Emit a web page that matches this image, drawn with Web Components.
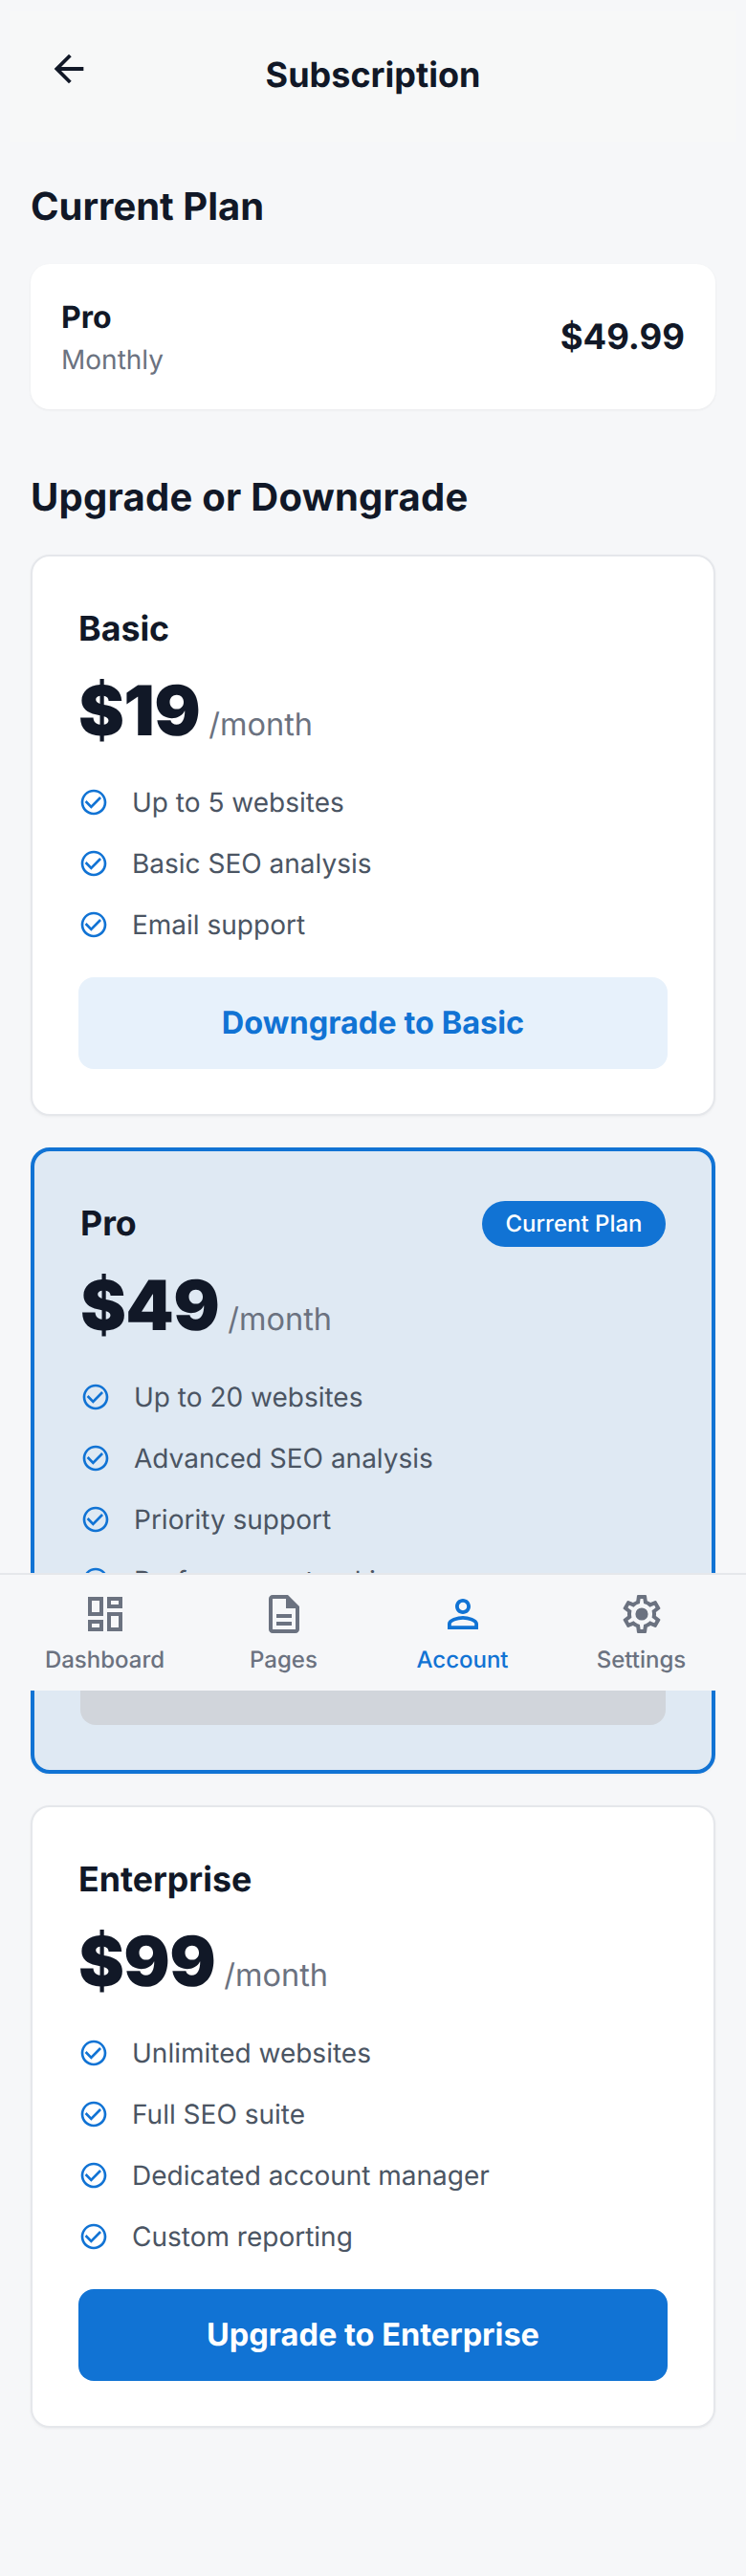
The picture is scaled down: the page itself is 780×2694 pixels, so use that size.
<!DOCTYPE html>
<html lang="en"><head><meta charset="utf-8"><title>Subscription</title>
<style>
html,body{margin:0;padding:0;background:#f6f7f9;font-family:Inter,"Liberation Sans",sans-serif;color:#111827;text-rendering:geometricPrecision}
body{position:relative;width:780px;height:2694px;overflow:hidden}
</style></head><body>
<sub-app></sub-app>
<script>
const ICONS={
back:'M20 11H7.83l5.59-5.59L12 4l-8 8 8 8 1.41-1.41L7.83 13H20v-2z',
check:'M16.59 7.58 10 14.17l-3.59-3.58L5 12l5 5 8-8zM12 2C6.48 2 2 6.48 2 12s4.48 10 10 10 10-4.48 10-10S17.52 2 12 2zm0 18c-4.42 0-8-3.58-8-8s3.58-8 8-8 8 3.58 8 8-3.58 8-8 8z',
dashboard:'M19 5v2h-4V5h4M9 5v6H5V5h4m10 8v6h-4v-6h4M9 17v2H5v-2h4M21 3h-8v6h8V3zM11 3H3v10h8V3zm10 8h-8v10h8V11zm-10 4H3v6h8v-6z',
pages:'M8 16h8v2H8zm0-4h8v2H8zm6-10H6c-1.1 0-2 .9-2 2v16c0 1.1.89 2 1.99 2H18c1.1 0 2-.9 2-2V8l-6-6zm4 18H6V4h7v5h5v11z',
account:'M12 5.9c1.16 0 2.1.94 2.1 2.1s-.94 2.1-2.1 2.1S9.9 9.16 9.9 8s.94-2.1 2.1-2.1m0 9c2.97 0 6.1 1.46 6.1 2.1v1.1H5.9V17c0-.64 3.13-2.1 6.1-2.1M12 4C9.79 4 8 5.79 8 8s1.79 4 4 4 4-1.79 4-4-1.79-4-4-4zm0 9c-2.67 0-8 1.34-8 4v3h16v-3c0-2.66-5.33-4-8-4z',
settings:'M19.43 12.98c.04-.32.07-.64.07-.98 0-.34-.03-.66-.07-.98l2.11-1.65c.19-.15.24-.42.12-.64l-2-3.46c-.09-.16-.26-.25-.44-.25-.06 0-.12.01-.17.03l-2.49 1c-.52-.4-1.08-.73-1.69-.98l-.38-2.65C14.46 2.18 14.25 2 14 2h-4c-.25 0-.46.18-.49.42l-.38 2.65c-.61.25-1.17.59-1.69.98l-2.49-1c-.06-.02-.12-.03-.18-.03-.17 0-.34.09-.43.25l-2 3.46c-.13.22-.07.49.12.64l2.11 1.65c-.04.32-.07.65-.07.98 0 .33.03.66.07.98l-2.11 1.65c-.19.15-.24.42-.12.64l2 3.46c.09.16.26.25.44.25.06 0 .12-.01.17-.03l2.49-1c.52.4 1.08.73 1.69.98l.38 2.65c.03.24.24.42.49.42h4c.25 0 .46-.18.49-.42l.38-2.65c.61-.25 1.17-.59 1.69-.98l2.49 1c.06.02.12.03.18.03.17 0 .34-.09.43-.25l2-3.46c.12-.22.07-.49-.12-.64l-2.11-1.65zm-1.98-1.71c.04.31.05.52.05.73 0 .21-.02.43-.05.73l-.14 1.13.89.7 1.08.84-.7 1.21-1.27-.51-1.04-.42-.9.68c-.43.32-.84.56-1.25.73l-1.06.43-.16 1.13-.2 1.35h-1.4l-.19-1.35-.16-1.13-1.06-.43c-.43-.18-.83-.41-1.23-.71l-.91-.7-1.06.43-1.27.51-.7-1.21 1.08-.84.89-.7-.14-1.13c-.03-.31-.05-.54-.05-.74s.02-.43.05-.73l.14-1.13-.89-.7-1.08-.84.7-1.21 1.27.51 1.04.42.9-.68c.43-.32.84-.56 1.25-.73l1.06-.43.16-1.13.2-1.35h1.39l.19 1.35.16 1.13 1.06.43c.43.18.83.41 1.23.71l.91.7 1.06-.43 1.27-.51.7 1.21-1.07.85-.89.7.14 1.13zM12 8.7a3.3 3.3 0 1 0 0 6.6 3.3 3.3 0 0 0 0-6.6z'
};
const def=(name,html,attrs)=>{
  customElements.define(name,class extends HTMLElement{
    static get observedAttributes(){return attrs?Object.keys(attrs):[]}
    constructor(){super();this.attachShadow({mode:'open'}).innerHTML=html}
    attributeChangedCallback(a,o,v){attrs[a].call(this,v)}
  });
};
def('ui-icon',`<style>:host{display:block;width:var(--s,48px);height:var(--s,48px);flex:none;color:inherit}svg{display:block;width:100%;height:100%;fill:currentColor}</style><svg viewBox="0 0 24 24"><path></path></svg>`,
{name(v){this.shadowRoot.querySelector('path').setAttribute('d',ICONS[v]||'')}});
def('top-bar',`<style>
:host{display:block;height:137px;margin:11px 10px 0;background:#f7f8f8;position:relative}
.bar{display:grid;grid-template-columns:48px 1fr 48px;padding:38px 0 0 39px;width:calc(100% - 78px)}
ui-icon{--s:46px;color:#111827}
h1{margin:0;padding-top:7px;font:700 36px/44px Inter,sans-serif;color:#111827;text-align:center}
</style><div class="bar"><ui-icon name="back"></ui-icon><h1><slot></slot></h1></div>`);
def('section-title',`<style>
:host{display:block;margin:var(--top,0) 0 31px}
h2{margin:0;font:700 40px/58px Inter,sans-serif;letter-spacing:var(--ls,0);color:#111827}
</style><h2><slot></slot></h2>`);
def('current-plan',`<style>
:host{display:flex;justify-content:space-between;align-items:center;height:152px;box-sizing:border-box;padding:0 32px;background:#fff;border-radius:20px;box-shadow:0 1px 3px rgba(0,0,0,.06)}
.n{font:700 32px/44px Inter,sans-serif;color:#111827;margin-top:4px}
.c{font:400 28px/44px Inter,sans-serif;color:#6b7280}
.p{font:700 36.5px/48px Inter,sans-serif;color:#111827}
</style><div><div class="n"><slot name="name"></slot></div><div class="c"><slot name="cycle"></slot></div></div><div class="p"><slot name="price"></slot></div>`);
def('feature-item',`<style>
:host{display:flex;align-items:center;gap:24px;height:64px;font:400 28px/40px Inter,sans-serif;color:#4b5563}
ui-icon{--s:32px;color:#1173d4}
</style><ui-icon name="check"></ui-icon><span><slot></slot></span>`);
def('plan-button',`<style>
:host{display:flex;align-items:center;justify-content:center;height:96px;border-radius:16px;font:700 32.5px/40px Inter,sans-serif;overflow:hidden}
:host([kind=soft]){background:#e7f1fb;color:#1173d4}
:host([kind=solid]){background:#1173d4;color:#fff}
:host([kind=off]){background:#d1d5db;color:#6b7280}
</style><slot></slot>`);
def('plan-card',`<style>
:host{display:block;box-sizing:border-box;background:#fff;border:2px solid #e5e7eb;border-radius:20px;padding:50px 48px 47px;box-shadow:0 1px 3px rgba(0,0,0,.05)}
:host([current]){background:#dfe9f3;border:4px solid #1173d4;padding:50px 48px 47px}
.top{display:flex;justify-content:space-between;align-items:center;min-height:50px}
.n{font:700 35.75px/50px Inter,sans-serif;color:#111827}
.pr{display:flex;align-items:baseline;gap:9px;height:84px;margin-top:20px}
.a{font:900 72px/84px Inter,sans-serif;letter-spacing:-.6px;color:#111827}
.m{font:400 32.5px/40px Inter,sans-serif;color:#6b7280}
.f{margin:21px 0 23px}
</style><div class="top"><div class="n"><slot name="name"></slot></div><slot name="badge"></slot></div>
<div class="pr"><span class="a"><slot name="price"></slot></span><span class="m">/month</span></div>
<div class="f"><slot></slot></div><slot name="action"></slot>`);
def('plan-badge',`<style>
:host{display:block;height:48px;margin-top:2px;padding:0 24.5px;border-radius:24px;background:#1173d4;color:#fff;font:500 24px/48px Inter,sans-serif}
</style><slot></slot>`);
def('nav-item',`<style>
:host{flex:1 1 0;display:flex;flex-direction:column;align-items:center;color:#6b7280;font:500 24px/32px Inter,sans-serif}
:host([active]){color:#1173d4}
span{margin-top:8px}
</style><ui-icon></ui-icon><span><slot></slot></span>`,
{icon(v){this.shadowRoot.querySelector('ui-icon').setAttribute('name',v)},active(){}});
def('bottom-nav',`<style>
:host{position:absolute;left:0;right:0;top:1645px;height:123px;box-sizing:border-box;border-top:2px solid #e5e7eb;background:#f6f7f9;display:flex;padding:17px 16px 0}
</style><slot></slot>`);
def('sub-app',`<style>
:host{display:block;width:780px}
main{display:block;padding:39px 32px 0}
.plans{display:flex;flex-direction:column;gap:33px}
</style>
<top-bar>Subscription</top-bar>
<main>
<section-title>Current Plan</section-title>
<current-plan><span slot="name">Pro</span><span slot="cycle">Monthly</span><span slot="price">$49.99</span></current-plan>
<section-title style="--top:63px;--ls:.25px">Upgrade or Downgrade</section-title>
<div class="plans">
<plan-card><span slot="name">Basic</span><span slot="price">$19</span>
<feature-item>Up to 5 websites</feature-item><feature-item>Basic SEO analysis</feature-item><feature-item>Email support</feature-item>
<plan-button slot="action" kind="soft">Downgrade to Basic</plan-button></plan-card>
<plan-card current><span slot="name">Pro</span><plan-badge slot="badge">Current Plan</plan-badge><span slot="price">$49</span>
<feature-item>Up to 20 websites</feature-item><feature-item>Advanced SEO analysis</feature-item><feature-item>Priority support</feature-item><feature-item>Performance tracking</feature-item>
<plan-button slot="action" kind="off">Current Plan</plan-button></plan-card>
<plan-card><span slot="name">Enterprise</span><span slot="price">$99</span>
<feature-item>Unlimited websites</feature-item><feature-item>Full SEO suite</feature-item><feature-item>Dedicated account manager</feature-item><feature-item>Custom reporting</feature-item>
<plan-button slot="action" kind="solid">Upgrade to Enterprise</plan-button></plan-card>
</div>
</main>
<bottom-nav>
<nav-item icon="dashboard">Dashboard</nav-item><nav-item icon="pages">Pages</nav-item><nav-item icon="account" active>Account</nav-item><nav-item icon="settings">Settings</nav-item>
</bottom-nav>`);
</script>
</body></html>
